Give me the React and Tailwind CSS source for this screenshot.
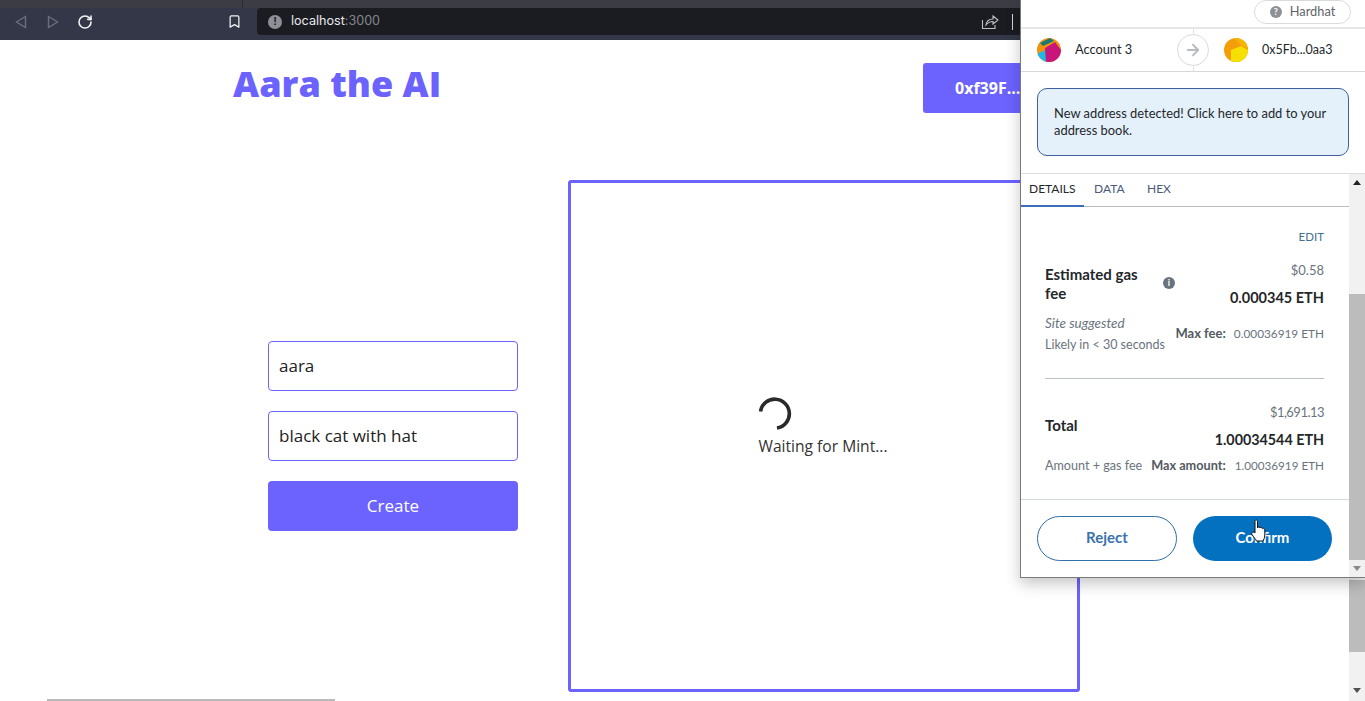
import { RotateCw, Bookmark, ArrowRight } from "lucide-react";

const PAGE_FONT = "font-['Open_Sans',sans-serif]";

const Triangle = ({ flip }) => (
  <svg width="12" height="14" viewBox="0 0 12 14" fill="none" stroke="#6b6f7c" strokeWidth="1.4">
    <path d={flip ? "M1.5 1.5 L10.5 7 L1.5 12.5 Z" : "M10.5 1.5 L1.5 7 L10.5 12.5 Z"} />
  </svg>
);

const ScrollArrow = ({ up, color = "#505050" }) => (
  <svg width="8" height="5" viewBox="0 0 8 5" fill={color}>
    <path d={up ? "M4 0 L8 5 L0 5 Z" : "M0 0 L8 0 L4 5 Z"} />
  </svg>
);

const TopBar = () => (
  <div className="h-10 bg-[#333747] flex flex-col">
    <div className="h-2 bg-[#3c3c45] flex">
      <div className="w-[243px] border-r border-[#2c2c33]" />
      <div className="flex-1" />
    </div>
    <div className="flex h-[27px] items-center">
      <div className="w-[257px] flex items-center pl-[15px]">
        <Triangle />
        <div className="ml-[20px]"><Triangle flip /></div>
        <RotateCw size={16} color="#f2f2f2" strokeWidth={2.4} className="ml-[18px]" />
        <Bookmark size={15} color="#f2f2f2" strokeWidth={2} className="ml-[134px]" />
      </div>
      <div className="w-[763px] h-[27px] rounded-l bg-[#1b1c22] flex items-center pl-[11px]">
        <div className="w-[14px] h-[14px] rounded-full bg-[#8d9096] flex items-center justify-center text-[#1b1c22] text-[11px] font-bold font-['Liberation_Sans',sans-serif]">!</div>
        <span className="ml-[9px] text-[12.6px] text-[#e8e8ea] font-['Inter',sans-serif]">
          localhost<span className="text-[#85878d]">:3000</span>
        </span>
        <svg width="18" height="16" viewBox="0 0 18 16" fill="none" stroke="#bfc0c4" strokeWidth="1.1" className="ml-auto mr-[13px]">
          <path d="M1.5 6 V14.5 H14 V11" />
          <path d="M5 11 C5.5 7 8.5 5 12 5 V2 L17 6 L12 10 V7.5 C9.5 7.5 7 8.5 5 11 Z" />
        </svg>
        <div className="w-px h-4 bg-[#d5d5d8] mr-[7px]" />
      </div>
    </div>
    <div className="h-[5px]" />
  </div>
);

const PageContent = () => (
  <div className={`flex-1 min-w-0 ${PAGE_FONT}`}>
    <div className="flex items-start pt-[23px]">
      <h1 className="ml-[233px] w-[690px] text-[36px] leading-[42px] font-extrabold text-[#6c63ff]">Aara the AI</h1>
      <button className="w-[192px] h-[50px] rounded-[3px] bg-[#6c63ff] text-white text-base font-bold pl-[32px] text-left">0xf39F...2266</button>
    </div>
    <div className="flex items-center ml-[268px] mt-[67px] gap-[50px]">
      <div className="w-[250px] flex flex-col gap-5">
        <input readOnly value="aara" className="h-[50px] w-full rounded border border-[#6c63ff] px-[10px] pb-[2px] text-[17px] text-[#222] outline-none" />
        <input readOnly value="black cat with hat" className="h-[50px] w-full rounded border border-[#6c63ff] px-[10px] pb-[2px] text-[17px] text-[#222] outline-none" />
        <button className="h-[50px] rounded bg-[#6c63ff] text-white text-[17px]">Create</button>
      </div>
      <div className="w-[512px] h-[512px] rounded-[3px] border-[3px] border-[#6c63ff] flex flex-col items-center justify-center pb-4">
        <div className="w-[131px]">
          <svg width="34" height="34" viewBox="0 0 34 34" fill="none" stroke="#2a2a2e" strokeWidth="3.6" className="-mt-1 -ml-[1px]">
            <path d="M2.5 14.5 A14.5 14.5 0 1 1 19 31" />
          </svg>
          <p className="mt-[5px] text-[15.6px] leading-5 text-[#333] whitespace-nowrap">Waiting for Mint...</p>
        </div>
      </div>
    </div>
    <div className="w-[288px] h-[2px] bg-[#b9b9b9] ml-[47px] mt-[7px]" />
  </div>
);

const PageScrollbar = () => (
  <div className="w-4 h-[661px] bg-[#f1f1f1] flex flex-col">
    <div className="h-[540px] " />
    <div className="h-[72px] bg-[#bcbcbc]" />
    <div className="flex-1 flex items-end justify-center pb-2"><ScrollArrow /></div>
  </div>
);

const AccountIcon = () => (
  <svg width="24" height="24" viewBox="0 0 24 24" className="rounded-full">
    <rect width="24" height="24" fill="#f2920f" />
    <path d="M0 16 L8 12 L10 24 L0 24 Z" fill="#1fb8e0" />
    <path d="M8 10 L18 4 L24 12 L24 24 L9 24 Z" fill="#c8157c" />
    <path d="M3 5 L13 0 L17 3 L6 8 Z" fill="#157a73" />
  </svg>
);

const RecipientIcon = () => (
  <svg width="24" height="24" viewBox="0 0 24 24" className="rounded-full">
    <rect width="24" height="24" fill="#f49e0b" />
    <path d="M7 24 L7 12 L17 8 L24 12 L24 24 Z" fill="#f5e000" />
    <path d="M10 0 L24 0 L24 10 L17 7 Z" fill="#f7b500" />
  </svg>
);

const Popup = () => (
  <div className="absolute top-0 right-0 w-[345px] h-[578px] bg-white border-l border-b border-[#7a7a7a] shadow-[0_6px_14px_rgba(0,0,0,0.22)] flex flex-col font-['Lato',sans-serif] text-[#24272a]">
    <div className="h-[29px] border-b-2 border-[#e6e6e6] flex justify-end pr-[14px]">
      <div className="w-[97px] h-6 rounded-[12px] border border-[#d8dcdf] flex items-center justify-center gap-[8px] text-[12.8px] text-[#5f6368]">
        <span className="w-3 h-3 rounded-full bg-[#8d9196] text-white text-[9px] font-bold flex items-center justify-center">?</span>
        Hardhat
      </div>
    </div>
    <div className="relative h-[43px] border-b border-[#d8d8d8] flex items-center pl-4">
      <AccountIcon />
      <span className="ml-[14px] w-[102px] text-[12.8px]">Account 3</span>
      <div className="absolute left-[172px] top-0 h-full w-px bg-[#e1e3e5]" />
      <div className="relative w-8 h-8 rounded-full border border-[#d8dcdf] bg-white flex items-center justify-center">
        <ArrowRight size={18} color="#b7bcc0" strokeWidth={2.4} />
      </div>
      <div className="ml-[15px]"><RecipientIcon /></div>
      <span className="ml-[14px] text-[12.5px]">0x5Fb...0aa3</span>
    </div>
    <div className="h-[101px] px-4 pt-[16px] shrink-0">
      <div className="w-[312px] h-[68px] rounded-[10px] border border-[#3f5f9e] bg-[#e4f1fa] px-4 pt-[16px] text-[12.9px] leading-[17px]">
        New address detected! Click here to add to your address book.
      </div>
    </div>
    <div className="flex-1 flex min-h-0 border-t border-[#dedede]">
      <div className="flex-1 min-w-0 flex flex-col">
        <div className="h-[33px] flex border-b border-[#b9bdc1] text-xs text-[#4a5a78] shrink-0">
          <div className="w-[63px] h-[33px] border-b-2 border-[#3a6ebc] pl-2 pt-[7px] text-[#24272a]">DETAILS</div>
          <div className="w-[63px] pl-[10px] pt-[7px]">DATA</div>
          <div className="pl-0 pt-[7px]">HEX</div>
        </div>
        <div className="flex-1 pl-6 pr-[25px] relative">
          <p className="text-right text-[11.5px] text-[#44708f] mt-[23px] leading-[14px]">EDIT</p>
          <div className="flex justify-between mt-[18px]">
            <p className="w-[110px] mt-[3px] text-[15px] leading-[19px] font-bold">Estimated gas fee</p>
            <div className="text-right">
              <p className="text-[13px] leading-[17px] text-[#6a737d]">$0.58</p>
              <p className="mt-[10px] text-[14.5px] leading-[17px] font-bold">0.000345 ETH</p>
            </div>
            <div className="absolute left-[142px] top-[70px] w-3 h-3 rounded-full bg-[#6a737d] text-white text-[9px] font-bold flex items-center justify-center">i</div>
          </div>
          <div className="flex justify-between items-center mt-[7px] pb-[23px] border-b border-[#bbc0c5] text-[11.8px] text-[#6a737d] whitespace-nowrap">
            <div className="leading-[21px]">
              <p className="italic text-[13.5px]">Site suggested</p>
              <p className="text-[12.5px]">Likely in &lt; 30 seconds</p>
            </div>
            <p><span className="font-bold text-[13px] text-[#535a61] mr-[8px]">Max fee:</span>0.00036919 ETH</p>
          </div>
          <div className="relative flex justify-between mt-[25px]">
            <p className="mt-[13px] text-[15px] leading-[17px] font-bold">Total</p>
            <div className="text-right">
              <p className="text-[13px] tracking-[-0.04em] leading-[17px] text-[#6a737d]">$1,691.13</p>
              <p className="mt-[10px] text-[14.3px] leading-[17px] font-bold">1.00034544 ETH</p>
            </div>
          </div>
          <div className="flex justify-between mt-[9px] text-[11.7px] leading-[17px] text-[#6a737d] whitespace-nowrap">
            <span className="text-[12.6px]">Amount + gas fee</span>
            <span className="font-bold text-[12.7px] text-[#535a61]">Max amount:</span>
            <span>1.00036919 ETH</span>
          </div>
        </div>
        <div className="h-[78px] border-t border-[#d6d9dc] flex gap-4 pl-4 pt-4 shrink-0 relative">
          <button className="w-[140px] h-[45px] rounded-full border border-[#2f6ea8] pb-[2px] text-[15px] font-bold text-[#3a72ad]">Reject</button>
          <button className="w-[139px] h-[45px] rounded-full bg-[#0370c0] pb-[2px] text-[15px] font-bold text-white">Confirm</button>
          <svg width="16" height="23" viewBox="0 0 16 23" className="absolute left-[230px] top-[19px]">
            <path d="M4 13 V2.5 C4 0.5 6.5 0.5 6.5 2.5 V9 C6.5 7.5 9 7.5 9 9 C9 8 11.3 8 11.3 9.6 C11.3 9 13.8 9 13.8 10.8 V16 C13.8 19 12.5 21 12 22 H5.5 C4.5 20 3 18.5 1 15.5 C0 13.5 2.5 12 4 14 Z" fill="#fff" stroke="#111" strokeWidth="1" />
          </svg>
        </div>
      </div>
      <div className="w-4 bg-[#f1f1f1] flex flex-col items-center">
        <div className="h-[120px] w-full pt-[6px] flex justify-center"><ScrollArrow up color="#222" /></div>
        <div className="h-[266px] w-full bg-[#bcbcbc]" />
        <div className="pt-[6px]"><ScrollArrow color="#8a8a8a" /></div>
      </div>
    </div>
  </div>
);

export default function App() {
  return (
    <div className="relative w-[1365px] h-[701px] overflow-hidden bg-white">
      <TopBar />
      <div className="flex">
        <PageContent />
        <PageScrollbar />
      </div>
      <Popup />
    </div>
  );
}
